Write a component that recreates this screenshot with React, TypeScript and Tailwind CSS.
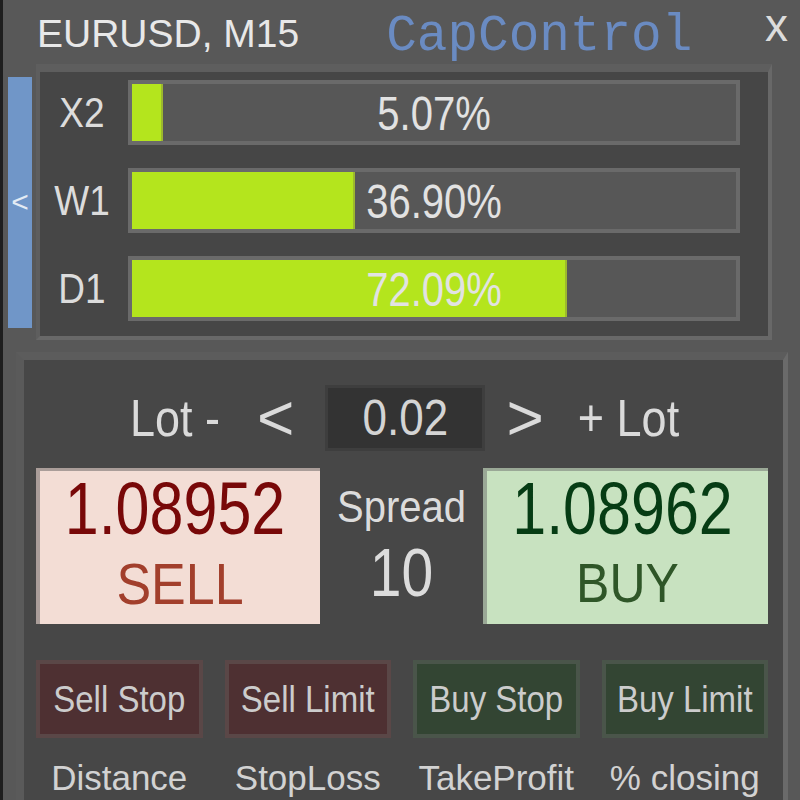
import React from 'react';

const bars = [
    { label: 'X2', value: 5.07 },
    { label: 'W1', value: 36.9 },
    { label: 'D1', value: 72.09 },
];

const orders = [
    { label: 'Sell Stop', className: 'bg-[#4e3032] border-[#5a4747]' },
    { label: 'Sell Limit', className: 'bg-[#4e3032] border-[#5a4747]' },
    { label: 'Buy Stop', className: 'bg-[#334533] border-[#4a554a]' },
    { label: 'Buy Limit', className: 'bg-[#334533] border-[#4a554a]' },
];

const fields = ['Distance', 'StopLoss', 'TakeProfit', '% closing'];

function Bar({ label, value }: { label: string; value: number }) {
    return (
        <div className="flex items-center h-[65px]">
            <div className="w-[84px] flex justify-center">
                <span className="text-[37px] leading-none text-[#dcdcdc] scale-y-115">{label}</span>
            </div>
            <div className="relative ml-[4px] w-[612px] h-full border-4 border-[#6a6a6a] bg-[#575757]">
                <div className="absolute left-0 top-0 bottom-0 bg-[#b4e51d] border-r-2 border-[#9cb82e]" style={{ width: `${value}%` }} />
                <div className="absolute inset-0 flex items-center justify-center">
                    <span className="text-[40px] leading-none text-[#e2e2e2] scale-y-120">{value.toFixed(2)}%</span>
                </div>
            </div>
        </div>
    );
}

export default function App() {
    return (
        <div className="w-[800px] h-[800px] overflow-hidden bg-[#585858] flex font-['Liberation_Sans',Arial,sans-serif]">
            <div className="w-[3px] shrink-0 bg-[#1e1e1e]" />
            <div className="flex-1 flex flex-col">
                {/* header */}
                <div className="h-[64px] shrink-0 flex items-center">
                    <span className="ml-[34px] mt-[3px] text-[39px] leading-none text-[#e8e8e8]">EURUSD, M15</span>
                    <span className="ml-[87px] mt-[9px] font-['Liberation_Mono',monospace] text-[51px] leading-none text-[#6a8bc2]">CapControl</span>
                    <span className="ml-auto mr-[12px] -mt-[15px] text-[46px] leading-none text-[#dcdcdc]">x</span>
                </div>

                {/* progress panel */}
                <div className="h-[276px] shrink-0 flex items-center">
                    <div className="ml-[5px] w-[24px] h-[251px] bg-[#7096c8] flex items-center justify-center">
                        <span className="text-[30px] leading-none text-[#e4ebf4]">&lt;</span>
                    </div>
                    <div className="ml-[4px] w-[736px] h-full border-t-8 border-l-4 border-r-4 border-b-4 border-t-[#5e5e5e] border-l-[#5e5e5e] border-r-[#686868] border-b-[#686868] bg-[#464646] pt-[8px] flex flex-col gap-[23px]">
                        {bars.map((b) => (
                            <Bar key={b.label} label={b.label} value={b.value} />
                        ))}
                    </div>
                </div>

                {/* trade panel */}
                <div className="mt-[12px] ml-[13px] w-[772px] flex-1 border-t-8 border-l-8 border-r-[5px] border-t-[#5c5c5c] border-l-[#5a5a5a] border-r-[#6a6a6a] bg-[#474747] flex flex-col">
                    <div className="mt-[25px] h-[66px] flex items-center text-[#dadada]">
                        <span className="ml-[106px] text-[45px] leading-none scale-y-115">Lot -</span>
                        <span className="ml-[37px] text-[64px] leading-none">&lt;</span>
                        <div className="ml-[31px] w-[160px] h-full border-[3px] border-[#3e3e3e] bg-[#333333] flex items-center justify-center">
                            <span className="text-[44px] leading-none text-[#d4d4d4] scale-y-115">0.02</span>
                        </div>
                        <span className="ml-[21px] text-[64px] leading-none">&gt;</span>
                        <span className="ml-[34px] text-[45px] leading-none scale-y-115">+ Lot</span>
                    </div>

                    <div className="mt-[17px] ml-[12px] h-[156px] flex">
                        <div className="w-[284px] border-t-[3px] border-l-4 border-[#aa9d99] bg-[#f3ddd5] flex flex-col items-center">
                            <span className="mt-[8px] mr-[10px] text-[61px] leading-none text-[#780808] scale-y-120">1.08952</span>
                            <span className="mt-[18px] text-[52px] leading-none text-[#a23f2c] scale-y-110">SELL</span>
                        </div>
                        <div className="w-[163px] flex flex-col items-center text-[#dcdcdc]">
                            <span className="mt-[19px] text-[40px] leading-none scale-y-110">Spread</span>
                            <span className="mt-[17px] text-[57px] leading-none scale-y-120">10</span>
                        </div>
                        <div className="w-[285px] border-t-[3px] border-l-4 border-[#9aa896] bg-[#c8e2c0] flex flex-col items-center">
                            <span className="mt-[8px] mr-[10px] text-[61px] leading-none text-[#063c14] scale-y-120">1.08962</span>
                            <span className="mt-[18px] text-[50px] leading-none text-[#2f5628] scale-y-110">BUY</span>
                        </div>
                    </div>

                    <div className="mt-[36px] ml-[12px] w-[732px] h-[78px] grid grid-cols-4 gap-x-[22px]">
                        {orders.map((o) => (
                            <div key={o.label} className={`border-4 flex items-center justify-center ${o.className}`}>
                                <span className="text-[33px] leading-none text-[#cccccc] scale-y-110">{o.label}</span>
                            </div>
                        ))}
                    </div>

                    <div className="mt-[22px] ml-[12px] w-[732px] grid grid-cols-4 gap-x-[22px]">
                        {fields.map((f) => (
                            <div key={f} className="flex justify-center">
                                <span className="text-[35px] leading-none text-[#d2d2d2]">{f}</span>
                            </div>
                        ))}
                    </div>
                </div>
            </div>
        </div>
    );
}
